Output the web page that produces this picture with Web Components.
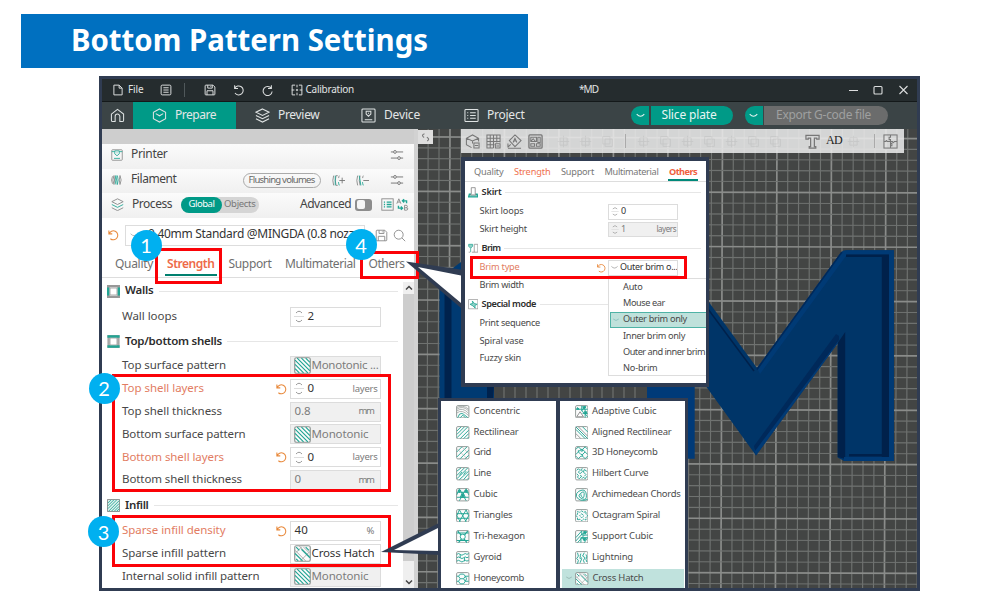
<!DOCTYPE html>
<html lang="en">
<head>
<meta charset="utf-8">
<title>Bottom Pattern Settings</title>
<style>
html,body{margin:0;padding:0;background:#fff;overflow:hidden}
body{font-family:"Noto Sans","Open Sans",sans-serif;font-size:11.5px;line-height:1;color:#444}
</style>
</head>
<body>
<slide-page></slide-page>
<script>
const TEAL = '#009a87', NAVY = '#303c52';

function define(name, render, after) {
  customElements.define(name, class extends HTMLElement {
    connectedCallback() {
      if (!this.shadowRoot) this.attachShadow({ mode: 'open' }).innerHTML = render(this);
      if (after) after(this);
    }
  });
}
const at = (el, n, d = '') => el.hasAttribute(n) ? el.getAttribute(n) : d;

/* One line of text that fills the given width, by tracking or (squeeze) by scaling. */
define('fit-text', () => `<style>:host{display:inline-block;white-space:nowrap;flex:none}span{display:inline-block;padding-bottom:2px;transform-origin:0 50%}</style><span><slot></slot></span>`, el => {
  const w = parseFloat(at(el, 'w', '0'));
  if (!w) return;
  const s = el.shadowRoot.querySelector('span');
  const nat = s.getBoundingClientRect().width;
  if (el.hasAttribute('squeeze')) s.style.transform = `scaleX(${w / nat})`;
  else s.style.letterSpacing = ((w - nat) / el.textContent.length) + 'px';
  el.style.width = w + 'px';
});
const T = (w, t, x = '') => `<fit-text w="${w}" ${x}>${t}</fit-text>`;

/* ---- icons, drawn in a 16-unit box ---- */
const t = `stroke="#21a594"`;
const frame = `<rect x=".7" y=".7" width="14.6" height="14.6" rx="1.5" fill="#fbfbfb" stroke="#8f9694" stroke-width="1.1"/>`;
const ICONS = {
  file: `<path d="M2.500 1.500h7l4 4v9h-11zM9.500 1.500v4h4"/>`,
  list: `<rect x="1.5" y="1.5" width="13" height="13" rx="1.5"/><path d="M4.5 5h7M4.5 8h7M4.5 11h7"/>`,
  save: `<path d="M1.5 2.5q0-1 1-1H12l2.500 2.500v9.500q0 1-1 1h-11q-1 0-1-1zM5 1.500v4h6v-4M4 14.500V9h8v5.500M9 3v1"/>`,
  undo: `<path d="M3.500 1.500v4.500h4.500M3.500 6A6 6 0 1 1 4 12"/>`,
  redo: `<path d="M12.500 1.500v4.500H8M12.500 6A6 6 0 1 0 13.500 10"/>`,
  calib: `<path d="M5.500 1.500h-4v13h4M10.500 1.500h4v13h-4M8 1v3.500M8 6.500v3M8 11.500V15M1 8h3.500M11.500 8H15M6.500 8h3"/>`,
  home: `<path d="M1.500 6.500L8 1.500l6.500 5V13q0 1.500-1.500 1.500h-2.500V9a2.500 2.500 0 0 0-5 0v5.500H3Q1.500 14.500 1.500 13z"/>`,
  cube: `<path d="M8 1L14.500 4.500v7L8 15 1.500 11.500v-7zM4 6l4 2.300L12 6"/>`,
  layers: `<path d="M8 1l7 3.500L8 8 1 4.500zM1 8l7 3.500L15 8M1 11.500L8 15l7-3.500"/>`,
  device: `<rect x="1" y="1" width="14" height="14" rx="1"/><path d="M4 12.500h8M5.500 3.500h5v3L8 8.800 5.500 6.500zM8 5v1"/>`,
  project: `<rect x="1" y="1.500" width="14" height="13" rx="1"/><path d="M3.500 5h1M6.500 5h6M3.500 8h1M6.500 8h6M3.500 11h1M6.500 11h6"/>`,
  printer: `<rect x="1" y="1" width="14" height="14" rx="1" stroke="#888"/><path ${t} d="M1 3.500h4M11 3.500h4M5 2.500h6v4L8 9 5 6.500zM4 12.500h8M7.500 5h1"/>`,
  spool: `<g><path ${t} d="M6.500 2q-2 6 0 12M8.500 2q2 6 0 12M6.500 2l2 12"/><path stroke="#888" d="M4 2q-3 6 0 12M2 3q-2.500 5 0 10M12 2q3 6 0 12M12 2q-2 6 0 12M4 2q1.500 6 0 12"/></g>`,
  layers2: `<path stroke="#888" d="M8 1l7 3.500L8 8 1 4.500zM1 12L8 15.500l7-3.500"/><path ${t} d="M1 8l7 3.500L15 8"/>`,
  sliders: `<path stroke="#777" d="M1 4.500h3M7.500 4.500H15M1 11.500h7.500M12 11.500h3"/><circle cx="5.700" cy="4.500" r="1.600" stroke="#777"/><circle cx="10.300" cy="11.500" r="1.600" stroke="#777"/>`,
  fadd: `<path stroke="#888" d="M2 2q-2 6 0 12M5 2q-2 6 0 12h2M5 2h2M9 2q-.8 1.500-.8 3"/><path ${t} d="M4 2v12M8 10q0 2 1 4"/><path stroke="#777" d="M9 8h7M12.500 4.500v7"/>`,
  fdel: `<path stroke="#888" d="M2 2q-2 6 0 12M5 2q-2 6 0 12M9 2q-.8 1.500-.8 3"/><path ${t} d="M4 2l2 12M8 10q0 2 1 4"/><path stroke="#777" d="M9 8h7"/>`,
  tlist: `<rect x="1" y="1" width="14" height="14" stroke="#888"/><path ${t} stroke-width="1.6" d="M3.500 5H5M7 5h6M3.500 8H5M7 8h6M3.500 11H5M7 11h6"/>`,
  ab: `<path stroke="#888" d="M1 7l2.500-6L6 7M2 5h3M10.500 9v6h2q2 0 2-1.600T12.500 12h-2M10.500 9h2q1.500 0 1.500 1.500T12.500 12"/><path ${t} stroke-width="1.7" d="M8.500 3.500H13v3M10 1.500l-2 2 2 2M3 9.500v3h4.500M6 10.500l2 2-2 2"/>`,
  reset: `<path stroke="#e8883a" stroke-width="1.400" d="M2.500 2v4.500H7M2.700 6.500A6 6 0 1 1 4.500 13"/>`,
  search: `<circle cx="7" cy="7" r="5.500"/><path d="M11 11l4 4"/>`,
  down: `<path d="M2.500 6Q8 12 13.500 6"/>`,
  walls: `<rect x="1.500" y="1.500" width="13" height="13" stroke="#989898" stroke-width="3"/><path ${t} stroke-width="3" d="M1.500 3v10M14.500 3v10"/><rect x="3.800" y="3.800" width="8.400" height="8.400" fill="#fff" stroke="#999" stroke-width=".8"/>`,
  shells: `<rect x="2" y="1.500" width="12" height="13" stroke="#a5a5a5" stroke-width="3"/><path ${t} stroke-width="3" d="M.5 1.800h15M.5 14.200h15"/><rect x="3.800" y="3.800" width="8.400" height="8.400" fill="#fff" stroke="#999" stroke-width=".8"/>`,
  infill: `<rect x=".7" y=".7" width="14.600" height="14.600" fill="#dff1ee" stroke="#888"/><path ${t} d="M1 5l4-4M1 8.500L8.500 1M1 12L12 1M2 15L15 2M5.500 15L15 5.500M9 15l6-6M12 15l3-3"/>`,
  skirt: `<path ${t} stroke-width="2" fill="#8fd0c6" d="M2 11h12l1 4H1z"/><path stroke="#777" fill="#fff" d="M5 1h6v9l1 2H4l1-2z"/>`,
  brim: `<path ${t} fill="#8fd0c6" d="M1 2h6v3L4 8 1 5zM4 8v6"/><path stroke="#888" fill="#fff" d="M9.500 2H15v12H9.500zM6 14h3.500M1 14h2"/>`,
  special: `<rect x="1" y="1" width="14" height="14" stroke="#999"/><path ${t} fill="#8fd0c6" stroke-width="1.200" d="M6.500 3l1 3.500L3 8l4.500 2.500L11 14l-.5-4L14 8l-4-1z"/>`,
  'p-mono': frame + `<path ${t} d="M1 11l4 4M1 7l8 8M1 3l12 12M3 1l12 12M7 1l8 8M11 1l4 4"/>`,
  'p-cross': frame + `<path stroke="#9a9f9e" stroke-width=".8" d="M2 7L7 2M6 15l9-9M1 5l10 10M5 1l10 10M9 2l5 5"/><path ${t} stroke-width="1.100" d="M2 2l3 3M1 8l7 7M2 13l2 2M7 4l8 8M11 2l3 3"/>`,
  'p-con': frame + `<path stroke="#8f9694" stroke-width=".8" d="M1 5q7-5 14 2M1 7q7-5 14 3M1 9.500q6-5 14 3M1 3q7-4 14 2"/><path ${t} d="M2 15q2-6 5-5l2 1 5 4M5 15l3-3 3 3"/>`,
  'p-rect': frame + `<path ${t} d="M1 6l5-5M1 10l9-9M1 14L14 1M5 15L15 5M9 15l6-6M13 15l2-2"/>`,
  'p-grid': frame + `<path ${t} d="M1 7l6-6M1 13L13 1M5 15L15 5M11 15l4-4"/><path stroke="#a5aaa8" stroke-width=".7" d="M1 3l12 12M7 1l8 8"/>`,
  'p-line': frame + `<path ${t} d="M1 5l5-4M1 10l9-9M1 14L14 1M4 15L15 5M9 15l6-7M13 15l2-2M4 10l3-4M9 9l3-4"/>`,
  'p-cubic': frame + `<path ${t} d="M1 5h14M1 11h14M4 1l8 14M12 1L4 15M1 8l3-7M15 8l-3-7M8 5l3 6H5z"/><path ${t} fill="#21a594" d="M2.500 3h3L4 5.500zM10.500 3h3L12 5.500zM6.500 8h3L8 11z"/>`,
  'p-tri': frame + `<path ${t} d="M1 5.500h14M1 11h14M4 1l8 14M12 1L4 15M1 8l3-7M15 8l-3-7M1 8l4 7M15 8l-4 7"/>`,
  'p-trihex': frame + `<path ${t} stroke-width="1.300" d="M1 3.500h14M1 12.500h14M2 1l11 14M14 1L3 15"/><circle cx="8" cy="8" r="3" fill="#fff" ${t}/>`,
  'p-gyr': frame + `<path ${t} d="M1 4q2-2 4 0t4 0 4 0l2-1M1 8q2-2 4 0t4 0 4 0l2-1M1 12q2-2 4 0t4 0 4 0l2-1M5 4v4M10 8v4"/>`,
  'p-hon': frame + `<path ${t} d="M5 2.500L3 5l2 3h4l2-3-2-2.500zM11 5h4M5 8l-2 3 2 3h4l2-3-2-3M11 11h4M1 5h2M1 11h2M11 5l1.500 3-1.500 3"/>`,
  'p-adapt': frame + `<path ${t} d="M1 5h14M8 1v6l7 7M12 1L8 7M9 10h6M12 5v10"/><path ${t} fill="#21a594" d="M9 2h4l-2 3zM3 3l2 2H2zM11 8h3l-1 3z"/><path stroke="#888" fill="#fff" d="M2 14l4-6 4 6z"/>`,
  'p-alig': frame + `<path stroke="#8f9694" d="M1 9l6 6M4 1l11 11"/><path ${t} d="M1 4l11 11M1 1l14 14M9 1l6 6"/>`,
  'p-3d': frame + `<path ${t} d="M1 4l3-3 3 3 2 0 3-3 3 3M4 7l-3 3M4 7l3 3M4 7l0-2M12 7l-3 3M12 7l3 3M1 12l3 3 3-3h2l3 3 3-3M7 4L4 7M9 4l3 3M7 10h2v2M7 4v2h2V4"/>`,
  'p-hil': frame + `<path ${t} d="M2 4l2-2 2 2-2 2 2 2 3-3-2-2 2-1M14 5l-3-2-1 3 3 3-2 2M2 8l2 2-1 2 2 2 3-3-2-1M8 14l2-2 2 2 2-3"/>`,
  'p-arch': frame + `<path ${t} d="M15 13.500Q8 16 4 13T2 6.500 8.500 2.500t5 6T9 13 4.800 8.800 8.500 5t2.300 3.500T8 10.300 7.500 7.500"/>`,
  'p-oct': frame + `<path ${t} stroke-dasharray="2.500 .8" d="M8 2l2 2 3-1v3l2 2-2 2v3l-3-1-2 2-2-2-3 1v-3L1.500 8 3 6V3l3 1zM8 5.500l2.500 2.500L8 10.500 5.500 8z"/>`,
  'p-sup': frame + `<path ${t} d="M1 9l7-8M1 13l8-9M3 15l8-9M7 15V9h8M11 15l4-6M8 1v5h7M12 1L9 6"/><path ${t} fill="#21a594" d="M10 2h4l-2 3zM9 10h4l-2 3z"/>`,
  'p-lig': frame + `<path ${t} d="M3 2l1 4-2 3 2 2-1 4M7 3l-1 3 2 3-2 5M11 2l-2 4 3 2-2 3 1 3M13 4l1 3-1 3 1 3M5 8l2 1"/>`,
  addcube: `<path d="M7 14.500L1.500 11.500V4.500L8 1l6.500 3.500V8M1.500 4.500L8 7.500l6.500-3M8 7.500V10M9.500 9.500h5.500v5.500H9.500zM10.500 12.300h3.500"/>`,
  plate: `<path d="M8 15H1V1h14v8M1 4.500h14M1 8h14M1 11.500h8M4.500 1v14M8 1v14M11.500 1v8M10 10.500h5V15h-5zM11 12.800h3"/>`,
  orient: `<path d="M8.500 1L15 7l-6.500 6.500L2.500 7zM1 15.300h14M1 10v4.500M1 14l3-3M6.500 9L8.500 4.500 10.500 9M7 7.500h3"/>`,
  arrange: `<rect x="1" y="1" width="14" height="14" rx="1" stroke-width="1.400"/><path d="M3 3.500h6v4.500H3zM10.500 3.500H13V9h-2.500zM3 10.500h4V13H3zM9 10.500h4V13H9zM3 8L5.500 5 8 8"/>`,
  tee: `<path stroke-width="1.300" d="M1 1.500h14v4h-2.500V4.500H10v9h1.500v1.500h-7v-1.500H6v-9H3.500v1H1z"/>`,
  assembly: `<rect x="1" y="1" width="14" height="14"/><path d="M8 1v2.500h-1.500v2.500H8V15M8 10h1.500v2.500H8M1 8h2q.5-2 1.500 0H8M8 8h2q1 2.500 2 0h3"/>`,
  collapse: `<path stroke="#777" stroke-width="1.600" d="M6.500 2.500Q1 4.500 6 8M10 7.500q5 3 .5 5.500"/>`,
  ghost: `<path d="M8 1v14M1 8h14M3.500 3.500h9v9h-9z"/>`,
  ghost2: `<path d="M2 2h9v9H2zM5 5h9v9H5z"/>`
};
define('ui-icon', el => {
  const s = at(el, 'size', '14');
  return `<style>:host{display:inline-flex;flex:none;width:${s}px;height:${s}px}svg{display:block}</style>
  <svg width="${s}" height="${s}" viewBox="0 0 16 16" fill="none" stroke="${at(el, 'color', 'currentColor')}" stroke-width="${at(el, 'sw', '1.1')}">${ICONS[at(el, 'name')]}</svg>`;
});
const I = (n, s = 14, c = 'currentColor', style = '', sw = '1.1') => `<ui-icon name="${n}" size="${s}" color="${c}" sw="${sw}" style="${style}"></ui-icon>`;

/* ---- page title ---- */
define('slide-title', () => `<style>:host{display:flex;align-items:center;margin:14px 0 0 21px;width:507px;height:54px;box-sizing:border-box;padding:0 0 0 50px;background:#0070c0;color:#fff;font:bold 30px/1 "Noto Sans",sans-serif}</style><slot></slot>`);

/* ---- window bars ---- */
define('window-bar', () => `<style>
:host{display:flex;align-items:center;height:23px;background:#252c2e;color:#e2e4e4;font-size:10px;border-bottom:1px solid #14191a;box-sizing:border-box}
i{width:1px;height:14px;background:#50585a}
</style>
${I('file', 12, '#dcdede', 'margin-left:10px', 1.3)}<span style="margin-left:4px">${T(15.5, 'File')}</span>
${I('list', 12, '#dcdede', 'margin-left:16px', 1.3)}<i style="margin-left:12px"></i>
${I('save', 12, '#dcdede', 'margin-left:19px', 1.3)}${I('undo', 12, '#dcdede', 'margin-left:16px', 1.4)}${I('redo', 12, '#dcdede', 'margin-left:18px', 1.4)}
${I('calib', 12, '#dcdede', 'margin-left:17px', 1.3)}<span style="margin-left:3px">${T(48.500, 'Calibration')}</span>
<span style="margin-left:225px">${T(19, '*MD')}</span>
<svg width="64" height="12" style="margin-left:250px" fill="none" stroke="#dcdede" stroke-width="1.100"><path d="M1 6.500h9M51.500 2l8 8M59.500 2l-8 8"/><rect x="26" y="2.500" width="8" height="7.500" rx="1"/></svg>`);

define('nav-tab', el => `<style>
:host{display:flex;align-items:center;height:27px;width:${at(el, 'width')}px;box-sizing:border-box;padding-left:${at(el, 'pad')}px;gap:8px;color:#e4e6e6;font-size:12px;${el.hasAttribute('active') ? `background:${TEAL};` : ''}}</style>
${I(at(el, 'icon'), 15, '#dfe3e3')}<slot></slot>`);

define('split-button', el => `<style>
:host{display:flex;gap:1.5px;height:19px;font-size:12px}
b,span{display:flex;align-items:center;justify-content:center;height:19px}
b{width:18px;background:${TEAL};border-radius:10px 0 0 10px}
span{width:${at(el, 'width')}px;background:${at(el, 'bg')};color:${at(el, 'fg')};border-radius:0 10px 10px 0;box-sizing:border-box;padding-right:5px}
</style><b>${I('down', 11, '#e8f5f3', '', 1.5)}</b><span><slot></slot></span>`);

define('nav-bar', () => `<style>:host{display:flex;align-items:center;height:27px;background:#3b4446}</style>
<nav-tab width="31" pad="8" icon="home"></nav-tab>
<nav-tab width="103" pad="19" icon="cube" active>${T(41, 'Prepare')}</nav-tab>
<nav-tab width="106" pad="19" icon="layers">${T(41.500, 'Preview')}</nav-tab>
<nav-tab width="104" pad="19" icon="device">${T(36, 'Device')}</nav-tab>
<nav-tab width="100" pad="18" icon="project">${T(37.500, 'Project')}</nav-tab>
<split-button width="82" bg="${TEAL}" fg="#e8f5f3" style="margin-left:85px">${T(55, 'Slice plate')}</split-button>
<split-button width="124" bg="#6b6c6c" fg="#9fa0a0" style="margin-left:12px">${T(95, 'Export G-code file')}</split-button>`);

/* ---- settings widgets ---- */
define('value-field', el => {
  const s = el.hasAttribute('small'), dis = el.hasAttribute('off'), ic = at(el, 'icon');
  return `<style>
:host{display:flex;align-items:center;box-sizing:border-box;flex:none;width:${s ? 70 : 91}px;height:${s ? 15.5 : 20}px;border:1px solid #dcdcdc;background:${dis ? '#f0f0f0' : '#fff'};color:${dis ? '#7c7c7c' : '#333'};font-size:${s ? 9 : 11.5}px;padding-left:${s ? 1 : ic ? 3 : 4}px;overflow:hidden}
:host([spin]){padding-left:${s ? 1 : 1}px}
em{font-style:normal;margin-left:auto;font-size:${s ? 8 : 9.5}px;color:#7a7a7a;padding-right:${s ? 1 : at(el, 'unit') === 'layers' ? 2 : 6}px;padding-top:1px}
svg{flex:none;margin-right:${s ? 1 : 2}px}
</style>
${el.hasAttribute('spin') ? `<svg width="${s ? 10 : 14}" height="${s ? 11 : 15}" viewBox="0 0 10 15" fill="none" stroke="#999" stroke-width="1"><path d="M2 4q3-3.500 6 0M2 11q3 3.500 6 0"/><path stroke="#ddd" d="M0 7.500h10"/></svg>` : ''}
${ic === 'down' ? I('down', 9, '#888') : ic ? I(ic, 17, 'currentColor', 'margin-right:1px') : ''}
<slot></slot>${at(el, 'unit') ? `<em>${T(at(el, 'uw'), at(el, 'unit'))}</em>` : ''}`;
});

define('setting-row', el => `<style>
:host{display:flex;align-items:center;box-sizing:border-box;height:${at(el, 'h')}px;padding-left:${at(el, 'pad', '20')}px;font-size:${at(el, 'fs', '11.5')}px;color:${el.hasAttribute('changed') ? '#e27c62' : '#484848'};flex:none}
.sp{flex:1}.end{display:flex;width:${at(el, 'end', '110')}px;align-items:center;gap:${at(el, 'gap', '3')}px;flex:none}
.end ui-icon{margin-left:-${at(el, 'rs', '15')}px}
</style>${T(at(el, 'w'), at(el, 'label'))}<div class="sp"></div><div class="end">${el.hasAttribute('changed') ? I('reset', +at(el, 'rsz', '12'), '#e8883a') : ''}<slot></slot></div>`);

define('group-head', el => `<style>
:host{display:flex;align-items:center;box-sizing:border-box;height:${at(el, 'h')}px;padding:0 ${at(el, 'right', '5')}px 0 ${at(el, 'pad', '5')}px;font-size:${at(el, 'fs', '11.5')}px;font-weight:600;color:#2d2d2d;flex:none;gap:${at(el, 'gap', '5')}px}
i{flex:1;height:1px;background:#e6e6e6}
</style>${I(at(el, 'icon'), +at(el, 'is', '13'))}${T(at(el, 'w'), at(el, 'label'))}<i></i>`);

/* ---- left settings panel ---- */
const field = (attrs, val) => `<value-field ${attrs}>${val}</value-field>`;
define('settings-panel', () => {
  const R = (label, w, f, x = '') => `<setting-row h="22.85" label="${label}" w="${w}" end="113.5" ${x}>${f}</setting-row>`;
  const n = v => `<span>${T(7, v)}</span>`;
  return `<style>
:host{display:flex;flex-direction:column;width:312px;height:459px;background:#fff;border-right:4px solid #d2d2d2;flex:none;overflow:hidden}
.strip{height:15px;background:#cecece;flex:none}
.bar{display:flex;align-items:center;height:24.5px;flex:none;background:linear-gradient(#fbfbfb,#f0f0f0);color:#444;font-size:12px;box-sizing:border-box;padding-bottom:3px;padding-left:9px}
.bar.p{padding-bottom:1px}
.pill{display:flex;align-items:center;justify-content:center;box-sizing:border-box;width:78px;height:15px;border:1px solid #aaa;border-radius:8px;font-size:9.500px;color:#666}
.seg{display:flex;height:16px;width:78px;background:#d5d5d5;border-radius:8px;font-size:9.500px;color:#777;align-items:center}
.seg b{font-weight:400;display:flex;align-items:center;justify-content:center;background:${TEAL};color:#fff;width:41px;height:16px;border-radius:8px}
.tog{width:17px;height:12px;border-radius:3px;background:#8d8d8d;box-sizing:border-box;padding:1.500px}
.tog i{display:block;width:8px;height:9px;border-radius:2px;background:#f5f5f5}
.preset{display:flex;align-items:center;height:35.500px;flex:none;padding-left:5px}
.combo{display:flex;align-items:center;box-sizing:border-box;width:240px;height:21px;border:1px solid #ddd;margin-left:6px;padding-left:3px;color:#333;font-size:12px;overflow:hidden}
.tabs{display:flex;align-items:center;height:25px;flex:none;padding-left:13px;color:#6f6f6f;font-size:12px;border-bottom:1px solid #ddd;box-sizing:border-box;}
.tabs span{display:flex;align-items:center;height:22px;box-sizing:border-box;padding-top:2px;border-bottom:2px solid transparent}
.tabs .on{color:#ee6a48;font-weight:600;border-color:#00806f;padding:2px 2px 0;margin:0 12px}
.body{display:flex;flex:1;min-height:0}
.list{flex:1;min-width:0;overflow:hidden}
.scroll{width:11px;background:#cdcdcd;margin-top:4px;display:flex;flex-direction:column;justify-content:space-between;flex:none}
.scroll u{display:flex;align-items:center;justify-content:center;background:#efefef;height:12px}
.scroll u:last-child{height:27px}
</style>
<div class="strip"></div>
<div class="bar">${I('printer', 12)}<span style="margin-left:8px">${T(36.500, 'Printer')}</span>${I('sliders', 14, '#777', 'margin-left:222px')}</div>
<div class="bar p">${I('spool', 12)}<span style="margin-left:8px">${T(45.500, 'Filament')}</span><span class="pill" style="margin-left:66px">${T(66, 'Flushing volumes')}</span>
${I('fadd', 13, '#777', 'margin-left:11px')}${I('fdel', 13, '#777', 'margin-left:11px')}${I('sliders', 14, '#777', 'margin-left:21px')}</div>
<div class="bar p">${I('layers2', 13)}<span style="margin-left:8px">${T(40, 'Process')}</span><span class="seg" style="margin-left:9px"><b>${T(26, 'Global')}</b><span style="margin-left:2px">${T(31.500, 'Objects')}</span></span>
<span style="margin-left:41px">${T(51, 'Advanced')}</span><span class="tog" style="margin-left:4px"><i></i></span>${I('tlist', 13, '#777', 'margin-left:9px')}${I('ab', 13, '#777', 'margin-left:2px')}</div>
<div class="preset">${I('reset', 12)}<div class="combo">${I('down', 10, '#999', 'margin-right:9px')}${T(206, '0.40mm Standard @MINGDA (0.8 nozz')}</div>${I('save', 13, '#888', 'margin-left:10px')}${I('search', 13, '#888', 'margin-left:5px')}</div>
<div class="tabs"><span>${T(38, 'Quality')}</span><span class="on">${T(47.500, 'Strength')}</span><span>${T(43, 'Support')}</span><span style="margin-left:13.500px">${T(70.500, 'Multimaterial')}</span><span style="margin-left:13px">${T(36, 'Others')}</span></div>
<div class="body"><div class="list">
<group-head h="26" icon="walls" label="Walls" w="28.500"></group-head>
${`<setting-row h="25" label="Wall loops" w="55" end="113.5">${field('spin', n('2'))}</setting-row>`}
<group-head h="25.500" icon="shells" label="Top/bottom shells" w="97"></group-head>
${R('Top surface pattern', 104, field('off icon="p-mono"', T(67, 'Monotonic ...')))}
${R('Top shell layers', 82, field('spin unit="layers" uw="25"', n('0')), 'changed')}
${R('Top shell thickness', 100, field('off unit="mm" uw="15"', T(16, '0.8')))}
${R('Bottom surface pattern', 123.500, field('off icon="p-mono"', T(57, 'Monotonic')))}
${R('Bottom shell layers', 102, field('spin unit="layers" uw="25"', n('0')), 'changed')}
${R('Bottom shell thickness', 120, field('off unit="mm" uw="15"', n('0')))}
<group-head h="28" icon="infill" label="Infill" w="23.500"></group-head>
${R('Sparse infill density', 103.500, field('unit="%" uw="7"', T(13.500, '40')), 'changed')}
${R('Sparse infill pattern', 104, field('icon="p-cross"', T(63, 'Cross Hatch')))}
${R('Internal solid infill pattern', 137.500, field('off icon="p-mono"', T(57, 'Monotonic')))}
</div>
<div class="scroll"><u><svg width="8" height="6" fill="none" stroke="#444" stroke-width="1.500"><path d="M1 4.500l3-3 3 3"/></svg></u><u><svg width="8" height="6" fill="none" stroke="#444" stroke-width="1.500" style="margin-top:14px"><path d="M1 1.500l3 3 3-3"/></svg></u></div>
</div>`;
});

/* ---- 3D build plate ---- */
define('plate-view', () => {
  let g = '';
  for (let k = -32; k < 22; k++) {
    const p = 721.7 + k * 10.9, m = k % 5 === 0;
    if (p > 418 && p < 918) g += `<path d="M${p + .8} 129L${p - .8} 588" stroke="${m ? '#8a8c8a' : '#6f7270'}" stroke-width="${m ? 1.7 : 1.15}"/>`;
  }
  for (let k = -6; k < 38; k++) {
    const p = 192.3 + k * 10.87, m = k % 5 === 0;
    if (p > 129) g += `<path d="M418 ${p - 1}L918 ${p + .6}" stroke="${m ? '#8a8c8a' : '#6f7270'}" stroke-width="${m ? 1.7 : 1.15}"/>`;
  }
  return `<style>
:host{display:flex;align-items:flex-start;position:relative;flex:1;height:459px;background:#434544;overflow:hidden}
.art{position:absolute;inset:0}
.handle{display:flex;align-items:center;justify-content:center;width:15px;height:14px;margin-top:1px;background:#dedede;position:relative}
.tools{display:flex;align-items:center;box-sizing:border-box;position:relative;margin-left:28px;width:443px;height:24px;background:rgba(234,234,234,.87);padding:0 4px 0 4px}
.tools b{width:1px;height:14px;background:#aaa}
.mute{display:flex;gap:9px;opacity:.1;align-items:center}
.ad{font:12px/1 "Liberation Serif",serif;color:#222}
</style>
<svg class="art" viewBox="418 129 499 459" width="499" height="459" preserveAspectRatio="none">${g}
<path fill="#003a72" d="M439.500 278L461 262H560V398H439.500z"/><path fill="#00224d" d="M444.500 281l7-6v123h-7zM487 385h7l-1 14h-6z"/>
<path fill="#434544" d="M494 386h153v14H494z"/><path stroke="#6f7270" stroke-width="1.150" d="M504 386v14M515 386v14M526 386v14M537 386v14M548 386v14M559 386v14M570 386v14M581 386v14M592 386v14M602 386v14M613 386v14M624 386v14M635 386v14"/>
<path fill="#003a78" d="M647 300h47.700v158.700H647z"/>
<path fill="#003568" d="M700 290L757 368 841 252.500Q843 250.300 847 250.300H893.800V461H844L837.700 457.500V343L756 455.500 700 378z"/>
<path fill="#003a75" d="M841 252.500Q843 250.300 847 250.300h46.800V461h-4.800V254.500H847L760 374l-3-6z"/>
<path fill="#00214b" d="M846 254.500h43V457h-7.200V257H846z"/>
<path fill="#00214b" d="M837.700 343l7.500-11v127l-7.500-2zM849 454h33v2.500h-33z"/>
<path fill="#003a75" d="M756 455.500l82-112.500v-4L754 450zM844 457h50v4h-50z"/>
<path fill="#00295a" d="M754 446L836 334l3 2v4l-84 111z"/>
<path stroke="#00214b" stroke-width="1.500" fill="none" d="M705 305l49 66"/>
<path stroke="#00295a" stroke-width="1.500" fill="none" d="M757 369.500L842 252"/>
</svg>
<div class="handle">${I('collapse', 11)}</div>
<div class="tools">${['addcube', 'plate', 'orient', 'arrange'].map((n, i) => I(n, 15, '#777', i ? 'margin-left:6px' : '')).join('')}
<span class="mute" style="margin-left:14px">${I('ghost', 13, '#555')}${I('ghost', 13, '#555')}${I('ghost2', 13, '#555')}</span><b style="margin-left:11px"></b>
<span class="mute" style="margin-left:11px">${[0, 1, 0, 1, 0, 1, 1].map(n => I(n ? 'ghost2' : 'ghost', 13, '#555')).join('')}</span>
${I('tee', 15, '#777', 'margin-left:23px')}<span class="ad" style="margin-left:6px">${T(16, 'AD')}</span><span class="mute" style="margin-left:5px">${I('ghost', 13, '#555')}</span><b style="margin-left:14px"></b>${I('assembly', 15, '#777', 'margin-left:8px')}</div>`;
});

define('app-window', () => `<style>
:host{display:flex;flex-direction:column;box-sizing:border-box;margin:8px 0 0 99px;width:821px;height:515px;border:3px solid ${NAVY};overflow:hidden}
main{display:flex;flex:1;min-height:0}
</style><window-bar></window-bar><nav-bar></nav-bar><main><settings-panel></settings-panel><plate-view></plate-view></main>`);

/* ---- enlarged "Others" tab ---- */
define('others-popup', () => {
  const R = (h, label, w, f = '', x = '') => `<setting-row h="${h}" pad="14.500" fs="9.200" rs="12" rsz="10" gap="2" end="98" label="${label}" w="${w}" ${x}>${f}</setting-row>`;
  const G = (h, icon, label, w) => `<group-head h="${h}" pad="2.500" gap="3.500" is="10.500" fs="9.200" right="5" icon="${icon}" label="${label}" w="${w}"></group-head>`;
  const opts = [['Auto', 19.5], ['Mouse ear', 42], ['Outer brim only', 64], ['Inner brim only', 62], ['Outer and inner brim', 82], ['No-brim', 34.5]];
  return `<style>
:host{display:flex;flex-direction:column;box-sizing:border-box;width:248px;height:230px;border:4px solid ${NAVY};border-right-width:3px;background:#fff;overflow:hidden;font-size:9.200px}
.tabs{display:flex;height:20px;border-bottom:1px solid #ddd;padding-left:9px;color:#777;flex:none;gap:10.500px}
.tabs span{display:flex;align-items:center;height:20px;border-bottom:0;padding-top:3px;box-sizing:border-box}
.hot{color:#f0714f}.tabs .on{color:#f0603e;font-weight:700;border-bottom:2px solid #00897a;padding:5px 1px 0}
.menu{position:absolute;left:143px;top:117px;width:98px;height:98px;box-sizing:border-box;border:1px solid #ddd;border-right:0;background:#fff;color:#484848;padding-top:.5px}
.menu div{display:flex;align-items:center;height:16.200px;box-sizing:border-box;padding-left:13px;margin-left:1px}
.menu .sel{background:#bfe1db;border:1px solid #4fb3a6;border-right:0;padding-left:1px;gap:3px}
</style>
<div class="tabs"><span>${T(29.500, 'Quality')}</span><span class="hot">${T(36.500, 'Strength')}</span><span>${T(33, 'Support')}</span><span>${T(54, 'Multimaterial')}</span><span class="on" style="margin-left:-1px">${T(28, 'Others')}</span></div>
${G(21, 'skirt', 'Skirt', 20)}
${R(17.500, 'Skirt loops', 44, field('small spin', T(6, '0')))}
${R(17.500, 'Skirt height', 47.500, field('small spin off unit="layers" uw="19.500"', T(5, '1')))}
${G(21, 'brim', 'Brim', 19)}
${R(17.500, 'Brim type', 40, field('small icon="down"', `<span style="margin-left:1px">${T(57.5, 'Outer brim o...')}</span>`), 'changed')}
${R(17.500, 'Brim width', 44.500)}
${G(21, 'special', 'Special mode', 54.500)}
${R(17.500, 'Print sequence', 60.500)}
${R(17.500, 'Spiral vase', 44)}
${R(17.500, 'Fuzzy skin', 41.500)}
<div class="menu">${opts.map((o, i) => i === 2 ? `<div class="sel">${I('down', 8, '#6aa')}${T(o[1], o[0])}</div>` : `<div>${T(o[1], o[0])}</div>`).join('')}</div>`;
});

/* ---- infill pattern menu ---- */
define('pattern-item', el => `<style>
:host{display:flex;align-items:center;height:20.870px;font-size:9.500px;color:#4c4c4c;box-sizing:border-box;padding-left:15px;gap:4px}
:host([on]){height:19px;margin:1px 1px 0 2px;padding-left:3px;background:#c0e2dd}
</style>${el.hasAttribute('on') ? I('down', 8, '#7a9a96', 'margin-right:-2px') : ''}${I(at(el, 'icon'), 13.500)}${T(at(el, 'w'), at(el, 'label'))}`);
define('pattern-popup', () => {
  const A = [['con', 'Concentric', 46.5], ['rect', 'Rectilinear', 45], ['grid', 'Grid', 17.5], ['line', 'Line', 17.5], ['cubic', 'Cubic', 24], ['tri', 'Triangles', 39], ['trihex', 'Tri-hexagon', 51.5], ['gyr', 'Gyroid', 28], ['hon', 'Honeycomb', 50.5]];
  const B = [['adapt', 'Adaptive Cubic', 64.5], ['alig', 'Aligned Rectilinear', 79.5], ['3d', '3D Honeycomb', 65.5], ['hil', 'Hilbert Curve', 56.5], ['arch', 'Archimedean Chords', 88.5], ['oct', 'Octagram Spiral', 68], ['sup', 'Support Cubic', 61], ['lig', 'Lightning', 41], ['cross', 'Cross Hatch', 51]];
  const L = a => a.map(r => `<pattern-item icon="p-${r[0]}" label="${r[1]}" w="${r[2]}" ${r[1] === 'Cross Hatch' ? 'on' : ''}></pattern-item>`).join('');
  return `<style>:host{display:flex;gap:4px;box-sizing:border-box;width:250px;height:193px;background:${NAVY};border:solid ${NAVY};border-width:3px}
div{background:#fff;height:187px;overflow:hidden}.a{width:115px}.b{width:125px}.b pattern-item:not([on]){padding-left:14.500px}.a{box-sizing:border-box}</style><div class="a">${L(A)}</div><div class="b">${L(B)}</div>`;
});

/* ---- annotations ---- */
define('mark-box', el => { const [x, y, w, h] = at(el, 'box').split(' '); return `<style>:host{position:absolute;left:${x}px;top:${y}px;width:${w}px;height:${h}px;box-sizing:border-box;border:3px solid #fb0207}</style>`; });
define('step-badge', el => `<style>:host{position:absolute;left:${+at(el, 'x') - 15.5}px;top:${+at(el, 'y') - 15.5}px;width:31px;height:31px;border-radius:50%;background:#00b0f0;color:#fff;display:flex;align-items:center;justify-content:center;font:20px/1 Lato,sans-serif}</style><slot></slot>`);

define('slide-page', () => `<style>
:host{display:flex;flex-direction:column;position:relative;width:1000px;height:600px;background:#fff}
.over{position:absolute}
</style>
<slide-title>${T(357, 'Bottom Pattern Settings', 'squeeze')}</slide-title>
<app-window></app-window>
<pattern-popup class="over" style="left:438px;top:398px"></pattern-popup>
<others-popup class="over" style="left:461px;top:157px"></others-popup>
<mark-box box="155 248 67 36"></mark-box><mark-box box="360 251 59 28"></mark-box>
<mark-box box="112 374 279 118"></mark-box><mark-box box="112 515 279 52"></mark-box><mark-box box="470 256 217 23"></mark-box>
<svg class="over" style="left:0;top:0;pointer-events:none" width="1000" height="600"><path fill="${NAVY}" d="M406 261.500L464 270V309L461 308z"/><path fill="#fff" d="M418 267L461 275.500V303z"/>
<path fill="${NAVY}" d="M381 552L441 522V555z"/><path fill="#fff" d="M394 550L438 528V551z"/></svg>
<step-badge x="146" y="245">1</step-badge><step-badge x="104" y="388">2</step-badge><step-badge x="103.500" y="531.500">3</step-badge><step-badge x="361" y="244.500">4</step-badge>`);
</script>
</body>
</html>
